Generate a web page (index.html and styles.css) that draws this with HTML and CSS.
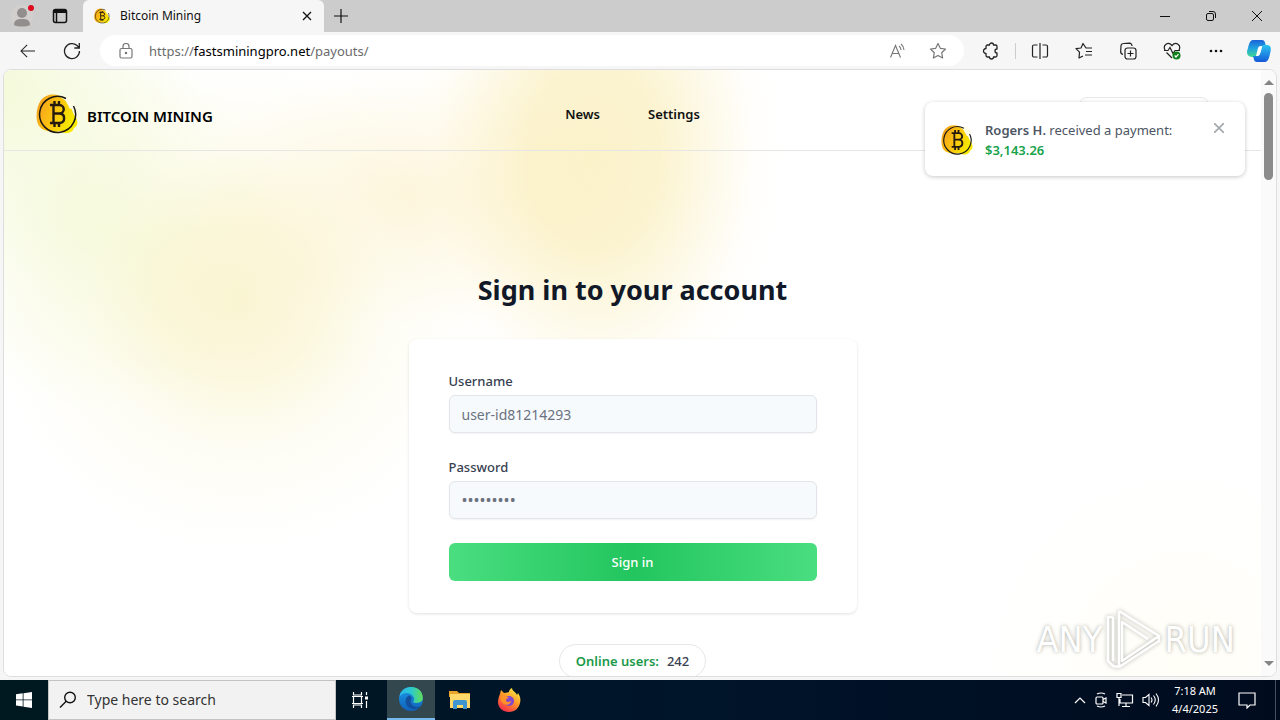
FILE: index.html
```html
<!DOCTYPE html>
<html lang="en">
<head>
<meta charset="utf-8">
<meta name="viewport" content="width=device-width, initial-scale=1">
<title>Bitcoin Mining</title>
<link rel="stylesheet" href="styles.css">
</head>
<body>
<svg class="defs" aria-hidden="true">
  <defs>
    <linearGradient id="gold" x1="0" x2="1" y1="0" y2="0.4"><stop offset="0" stop-color="#f39a20"/><stop offset=".5" stop-color="#fbc012"/><stop offset="1" stop-color="#f6ea00"/></linearGradient>
    <linearGradient id="edgeA" x1="0" x2="1"><stop offset="0" stop-color="#2bb5ec"/><stop offset=".5" stop-color="#2bc9cf"/><stop offset="1" stop-color="#62dc55"/></linearGradient>
    <linearGradient id="edgeB" x1="0" x2="0" y1="0" y2="1"><stop offset="0" stop-color="#1b9be8"/><stop offset="1" stop-color="#1160ba"/></linearGradient>
    <linearGradient id="fox" x1="0.8" x2="0.2" y1="0" y2="1"><stop offset="0" stop-color="#fff04a"/><stop offset=".45" stop-color="#ff9a28"/><stop offset="1" stop-color="#f4244f"/></linearGradient>
    <linearGradient id="copA" x1="0" x2="0" y1="0" y2="1"><stop offset="0" stop-color="#1b62d8"/><stop offset=".5" stop-color="#20a6df"/><stop offset="1" stop-color="#41d990"/></linearGradient>
    <linearGradient id="copB" x1="0" x2="0" y1="0" y2="1"><stop offset="0" stop-color="#2cc5f2"/><stop offset="1" stop-color="#1559d8"/></linearGradient>
    <symbol id="coin" viewBox="0 0 42 42">
      <path d="M3 33C-1 27 0 14 5 7 9 2 17 0 23 3L33 10 38 22C43 28 42 33 38 35 37 40 29 42 24 38 17 40 10 38 6 36Z" fill="url(#gold)"/>
      <path d="M27 3l10 2 2 8-5 3z" fill="#fdfde8"/>
      <path d="M30 5.500A18 18 0 1 0 37.500 13" fill="none" stroke="#1c1714" stroke-width="1.500"/>
      <path d="M14 12h9.500a4.200 4.200 0 0 1 0 8.500H17M24 20.500a4.800 4.800 0 0 1 0 9.500H14M17.500 12V30M18.500 8v4M23 8v4M18.500 30v4M23 30v4" fill="none" stroke="#241a10" stroke-width="2.400"/>
    </symbol>
  </defs>
</svg>

<div class="tabs">
  <button class="tabtool" aria-label="Profile"><svg width="26" height="26" viewBox="0 0 26 26"><circle cx="13" cy="13" r="11" fill="#d2d0ce"/><circle cx="13" cy="10" r="5" fill="#918e8b"/><path d="M5 22c0-5 3-6 8-6s8 1 8 6c-4 2-12 2-16 0z" fill="#918e8b"/><circle cx="22" cy="5" r="3" fill="#e00b1c"/></svg></button>
  <button class="tabtool" aria-label="Tab actions"><svg width="16" height="16" viewBox="0 0 16 16" fill="none" stroke="#111" stroke-width="1.500"><rect x="1.500" y="1.500" width="13" height="13" rx="2"/><path d="M2 3.500h12" stroke-width="3"/><path d="M4.500 4v10"/></svg></button>
  <div class="tab">
    <svg width="16" height="16"><use href="#coin"/></svg>
    <span class="tabtitle">Bitcoin Mining</span>
    <button class="iconbtn" aria-label="Close tab"><svg width="10" height="10" viewBox="0 0 10 10" stroke="#111" stroke-width="1.300"><path d="M1 1l8 8M9 1L1 9"/></svg></button>
  </div>
  <button class="newtab" aria-label="New tab"><svg width="14" height="14" viewBox="0 0 14 14" stroke="#111" stroke-width="1.200"><path d="M7 0v14M0 7h14"/></svg></button>
  <div class="wincontrols">
    <button class="win" aria-label="Minimize"><svg width="10" height="10" stroke="#111"><path d="M0 5.500h10"/></svg></button>
    <button class="win" aria-label="Restore"><svg width="10" height="10" viewBox="0 0 10 10" fill="none" stroke="#111"><rect x=".5" y="2.500" width="7" height="7" rx="1.500"/><path d="M3 .5h4a2.500 2.500 0 0 1 2.500 2.500v4"/></svg></button>
    <button class="win" aria-label="Close"><svg width="10" height="10" viewBox="0 0 10 10" stroke="#111"><path d="M0 0l10 10M10 0L0 10"/></svg></button>
  </div>
</div>

<div class="toolbar">
  <button class="tool" aria-label="Back"><svg width="16" height="14" viewBox="0 0 18 16" fill="none" stroke="#222" stroke-width="1.200"><path d="M17 8H1.500M8 1L1 8l7 7"/></svg></button>
  <button class="tool" aria-label="Reload"><svg width="18" height="18" viewBox="0 0 18 18" fill="none" stroke="#222" stroke-width="1.300"><path d="M16.500 9A7.500 7.500 0 1 1 14 3.500L16 5.500M16.300 1v5h-5"/></svg></button>
  <div class="address">
    <svg width="14" height="16" viewBox="0 0 14 16" fill="none" stroke="#777" stroke-width="1.200"><rect x="1" y="5.500" width="12" height="9.500" rx="1.500"/><path d="M4 5.500V3.500a3 3 0 0 1 6 0v2"/><circle cx="7" cy="10" r=".7" fill="#777"/></svg>
    <span class="url">https://<b>fastsminingpro.net</b>/payouts/</span>
    <button class="iconbtn" aria-label="Read aloud"><svg width="18" height="16" viewBox="0 0 18 16" fill="none" stroke="#777" stroke-width="1.100"><path d="M1.500 14.500L6.500 2.500l5 12M3.300 10.500h6.500M10 3q2 1.500 2 4M12 1q3 2.500 3 6"/></svg></button>
    <button class="iconbtn" aria-label="Add to favorites"><svg width="18" height="18" viewBox="0 0 18 18" fill="none" stroke="#777" stroke-width="1.200" stroke-linejoin="round"><path d="M9 1.500l2.300 4.800 5.200.7-3.800 3.700.9 5.300L9 13.500 4.400 16l.9-5.300L1.500 7l5.200-.7z"/></svg></button>
  </div>
  <button class="tool" aria-label="Extensions"><svg width="18" height="18" viewBox="0 0 18 18" fill="none" stroke="#222" stroke-width="1.300" stroke-linejoin="round"><path d="M5.500 3h2a2 2 0 0 1 4 0h2A1.500 1.500 0 0 1 15 4.500V7a2 2 0 0 0 0 4v2.500a1.500 1.500 0 0 1-1.500 1.500h-2a2 2 0 0 1-4 0h-2A1.500 1.500 0 0 1 4 13.500V11.500a2.500 2.500 0 1 1 0-5v-2A1.500 1.500 0 0 1 5.500 3z"/></svg></button>
  <span class="sep"></span>
  <button class="tool" aria-label="Split screen"><svg width="18" height="16" viewBox="0 0 18 16" fill="none" stroke="#222" stroke-width="1.200"><path d="M6.500 2H3a1.500 1.500 0 0 0-1.500 1.500v9A1.500 1.500 0 0 0 3 14h3.500M11.500 2H15a1.500 1.500 0 0 1 1.500 1.500v9A1.500 1.500 0 0 1 15 14h-3.500M9 0v16"/></svg></button>
  <button class="tool" aria-label="Favorites"><svg width="18" height="18" viewBox="0 0 18 18" fill="none" stroke="#222" stroke-width="1.200" stroke-linejoin="round"><path d="M17 6h-6L8 1.500 6 6l-5 .7 3.500 3.500L4 16l4-2M11 9.500h6M10 13h7"/></svg></button>
  <button class="tool" aria-label="Collections"><svg width="18" height="18" viewBox="0 0 18 18" fill="none" stroke="#222" stroke-width="1.200"><rect x="6" y="6" width="11" height="11" rx="2.500"/><path d="M11.500 8.500v6M8.500 11.500h6M4 12.500C2 12 1.500 10.500 1.700 9L2 4a2.500 2.500 0 0 1 2.500-2.500l6-.3A2.500 2.500 0 0 1 13 4"/></svg></button>
  <button class="tool" aria-label="Browser essentials"><svg width="18" height="18" viewBox="0 0 18 18" fill="none" stroke="#222" stroke-width="1.200"><path d="M2 8C-.5 3 5-1 9 3.500 13-1 18.500 3 16 8M3.500 10.500L9 16M1 8.500h4l2-3 3 6 2-3h5"/><circle cx="13.500" cy="13.500" r="4" fill="#10801d" stroke="none"/><path d="M11.700 13.500l1.300 1.500 2.500-2.800" stroke="#fff"/></svg></button>
  <button class="tool" aria-label="More"><svg width="14" height="4" fill="#111"><circle cx="2" cy="2" r="1.300"/><circle cx="7" cy="2" r="1.300"/><circle cx="12" cy="2" r="1.300"/></svg></button>
  <button class="tool copilot" aria-label="Copilot"><svg width="24" height="22" viewBox="0 0 24 22"><path d="M6 0h9c3 0 3 3 4 6h-3c-3 0-4 2-5 5l-1 4c-1 3-3 2-5 2-5 0-6-4-4-9C2 4 3 0 6 0z" fill="url(#copA)"/><path d="M18 22H10c-3 0-3-3-4-6h3c3 0 4-2 5-5l1-4c1-3 3-2 5-2 5 0 4 5 3 9-1 4-2 8-5 8z" fill="url(#copB)"/><path d="M11 8c1-2 2-2 4-2l-2 8c-1 2-2 2-4 2z" fill="#fff"/></svg></button>
</div>

<div class="frame">
  <div class="page">
    <header class="header">
      <a class="brand" href="#"><svg width="42" height="42"><use href="#coin"/></svg><span>BITCOIN MINING</span></a>
      <nav class="nav"><a href="#">News</a><a href="#">Settings</a></nav>
      <span class="account"></span>
    </header>
    <main class="main">
      <h1 class="title">Sign in to your account</h1>
      <form class="card">
        <label class="label" for="username">Username</label>
        <input class="field" id="username" type="text" placeholder="user-id81214293">
        <label class="label" for="password">Password</label>
        <input class="field dots" id="password" type="password" placeholder="•••••••••">
        <button class="submit" type="button">Sign in</button>
      </form>
      <div class="online"><span class="onlinelabel">Online users:</span><span>242</span></div>
    </main>
    <div class="toast" role="status">
      <svg width="32" height="32"><use href="#coin"/></svg>
      <p class="toasttext"><b>Rogers H.</b> received a payment:<br><strong>$3,143.26</strong></p>
      <button class="iconbtn" aria-label="Dismiss"><svg width="10" height="10" viewBox="0 0 10 10" stroke="#a2a6ad" stroke-width="1.600"><path d="M0 0l10 10M10 0L0 10"/></svg></button>
    </div>
    <div class="watermark">
      <span>ANY</span>
      <svg width="58" height="64" viewBox="0 0 58 64" fill="none" stroke="#fff" stroke-width="2.500" stroke-linejoin="round"><path d="M14 3v56M14 3l40 25-37 25V14l26 17M14 59l40-26v-5M8 9H3v44l5 5 6 1M8 9v44"/></svg>
      <span>RUN</span>
    </div>
  </div>
  <div class="scrollbar"><span class="arrow up"></span><span class="thumb"></span><span class="arrow down"></span></div>
</div>

<div class="taskbar">
  <button class="task" aria-label="Start"><svg width="16" height="16" viewBox="0 0 16 16" fill="#fff"><path d="M0 2.200l6.700-.9v6.200H0zM7.500 1.200L16 0v7.500H7.500zM0 8.300h6.700v6.200L0 13.600zM7.500 8.300H16V16l-8.500-1.200z"/></svg></button>
  <label class="search"><svg width="18" height="18" viewBox="0 0 18 18" fill="none" stroke="#111" stroke-width="1.400"><circle cx="11" cy="6.500" r="5.300"/><path d="M7.200 10.300L1 16.500"/></svg><input class="searchinput" type="text" placeholder="Type here to search" aria-label="Search"></label>
  <button class="task" aria-label="Task view"><svg width="18" height="16" viewBox="0 0 18 16" fill="none" stroke="#fff" stroke-width="1.200"><path d="M2.500 0v3h8V0M2.500 16v-3h8v3M2.500 4.500v7M10.500 4.500v7M1 4.500h11M1 11.500h11M15.500 0v3M15.500 9v7"/><path d="M14 4.500h3v3h-3z" fill="#fff" stroke="none"/></svg></button>
  <button class="task active" aria-label="Edge"><svg width="24" height="24" viewBox="0 0 24 24"><circle cx="12" cy="12" r="12" fill="url(#edgeB)"/><path d="M.5 10C3 5 11 5 14 9c2 3 1 5 0 6 2 2 8 1 9.500-2C25 5 19 0 12 0 6 0 1 4 .5 10z" fill="url(#edgeA)"/><path d="M9 9c-5 4-2 13 6 13 3 0 5-1 7-3-4 2-9 1-10-3-1-2 0-4 1-5-1-2-3-3-4-2z" fill="#124f9c"/></svg></button>
  <button class="task" aria-label="File Explorer"><svg width="22" height="20" viewBox="0 0 22 20"><path d="M0 1h8l2 2h11v4H0z" fill="#e9a52b"/><path d="M1 4h20v14H1z" fill="#ffd96a"/><path d="M4 19v-7q0-2 2-2h10q2 0 2 2v7h-4v-4H8v4z" fill="#3e95d0"/></svg></button>
  <button class="task" aria-label="Firefox"><svg width="24" height="24" viewBox="0 0 24 24"><path d="M3 6l1-4 3 3c3 0 4-1 5-1 0-2 1-3 3-4 0 3 4 4 5 7l1-2c2 3 3 6 2 10-1 5-5 9-11 9C6 24 1 20 1 14c0-3 1-6 2-8z" fill="url(#fox)"/><circle cx="12" cy="13" r="5" fill="#8247cf"/><path d="M4 8c3-1 6 0 8 2-2 0-3 1-3 3 2 2 4 0 5 0 0 3-4 5-7 3-3-2-4-5-3-8z" fill="#ff9329"/></svg></button>
  <div class="tray">
    <svg width="12" height="8" fill="none" stroke="#fff" stroke-width="1.200"><path d="M1 7l5-5 5 5"/></svg>
    <svg width="14" height="16" viewBox="0 0 14 16" fill="none" stroke="#fff" stroke-width="1.200"><rect x="2" y="5" width="7" height="7" rx="1"/><path d="M9 7.500l3-1.500v5l-3-1.500M3 2q4-2 8 0M3 14q4 2 8 0"/></svg>
    <svg width="18" height="16" viewBox="0 0 18 16" fill="none" stroke="#fff" stroke-width="1.200"><path d="M6 3h10.500v8H4V7M1 1.500h4v4H1zM3 5.500V14M10 11v3M6 14.500h8"/></svg>
    <svg width="18" height="16" viewBox="0 0 18 16" fill="none" stroke="#fff" stroke-width="1.100"><path d="M1 5.500h2.500L7 2.500v11l-3.500-3H1zM9 5.500q2 2.500 0 5M11.500 3.500q3.500 4.500 0 9M14 1.500q5 6.500 0 13"/></svg>
  </div>
  <div class="clock"><span>7:18 AM</span><span>4/4/2025</span></div>
  <button class="notify" aria-label="Notifications"><svg width="18" height="18" viewBox="0 0 18 18" fill="none" stroke="#fff" stroke-width="1.200"><path d="M1 2h16v12h-5l-3 3v-3H1z"/></svg></button>
</div>
</body>
</html>
```

FILE: styles.css
```css
* { box-sizing: border-box; }
body {
  margin: 0;
  height: 100vh;
  display: flex;
  flex-direction: column;
  overflow: hidden;
  background: #f6f6f6;
  font-family: "Noto Sans", "Open Sans", sans-serif;
  font-size: 14px;
  line-height: 20px;
  color: #111;
}
button { border: 0; padding: 0; background: none; font: inherit; color: inherit; }
a { color: inherit; text-decoration: none; }
svg { display: block; flex: none; }
.defs { position: absolute; width: 0; height: 0; }
.iconbtn { display: grid; place-items: center; }

/* Browser chrome */
.tabs { display: flex; flex: none; height: 32px; padding-left: 3px; background: #cccccc; }
.tabtool { display: grid; place-items: center; width: 38px; }
.tab {
  display: flex;
  align-items: center;
  gap: 10px;
  width: 241px;
  margin-left: 4px;
  padding: 0 12px 0 11px;
  border-radius: 6px 6px 0 0;
  background: #f6f6f6;
}
.tabtitle { flex: 1; font-size: 12px; }
.newtab { display: grid; place-items: center; width: 34px; }
.wincontrols { display: flex; margin-left: auto; }
.win { display: grid; place-items: center; width: 46px; }
.toolbar { display: flex; flex: none; align-items: center; height: 37px; padding: 0 0 0 6px; }
.tool { display: grid; place-items: center; width: 44px; height: 36px; }
.copilot { width: 42px; }
.address {
  display: flex;
  flex: 1;
  align-items: center;
  gap: 16px;
  height: 31px;
  margin: 0 5px 0 6px;
  padding: 0 14px 0 19px;
  border-radius: 16px;
  background: #fff;
}
.address .iconbtn { width: 24px; }
.url { flex: 1; font-size: 13px; color: #6b6b6b; }
.url b { font-weight: 400; color: #000; }
.sep { width: 1px; height: 16px; margin: 0 2px; background: #ccc; }

.frame {
  display: flex;
  flex: 1;
  min-height: 0;
  margin: 0 3px 3px;
  border: 1px solid #dedede;
  border-radius: 8px;
  overflow: hidden;
  background: #fff;
}
.page {
  position: relative;
  flex: 1;
  overflow: hidden;
  background:
    radial-gradient(ellipse 190px 270px at 590px 85px, rgba(250, 239, 190, .8) 0, rgba(250, 239, 190, .72) 35%, rgba(252, 243, 206, .4) 65%, rgba(255, 250, 232, .15) 85%, transparent 100%),
    radial-gradient(circle at 235px 230px, rgba(248, 239, 188, .65) 0, rgba(249, 242, 198, .55) 80px, rgba(251, 248, 220, .3) 150px, transparent 250px),
    radial-gradient(circle at 100px 160px, rgba(240, 248, 206, .7) 0, rgba(246, 250, 220, .4) 100px, transparent 180px),
    radial-gradient(ellipse 220px 130px at 410px 125px, rgba(253, 243, 212, .85) 0, rgba(254, 246, 222, .5) 50%, transparent 100%),
    radial-gradient(circle at 0 20px, rgba(243, 249, 214, .9) 0, transparent 190px),
    radial-gradient(circle at 1180px 600px, #fffef7 0, transparent 200px),
    #fff;
}
.header {
  display: grid;
  grid-template-columns: 1fr auto 1fr;
  align-items: center;
  height: 81px;
  padding: 0 32px;
  border-bottom: 1px solid #e6e7e4;
}
.brand { display: flex; align-items: center; gap: 9px; padding-top: 8px; font-size: 15px; font-weight: 600; color: #000; }
.brand span { padding-top: 4px; }
.nav { display: flex; gap: 48px; padding-top: 8px; font-size: 13px; font-weight: 600; }
.account { justify-self: end; width: 130px; height: 34px; margin: 8px 20px 0; border: 1px solid #e5e7eb; border-radius: 8px; background: #fff; }

/* Sign-in form */
.main { display: flex; flex-direction: column; align-items: center; padding-top: 121px; }
.title { margin: 0; font-size: 27px; line-height: 36px; font-weight: 700; color: #111827; }
.card {
  display: flex;
  flex-direction: column;
  width: 448px;
  max-width: 100%;
  margin-top: 31px;
  padding: 32px 40px;
  border-radius: 8px;
  background: #fff;
  box-shadow: 0 1px 3px rgba(0, 0, 0, .12);
}
.label { font-size: 13px; font-weight: 500; color: #374151; }
.field {
  height: 38px;
  margin: 4px 0 24px;
  padding: 0 12px;
  border: 1px solid #e2e6ea;
  border-radius: 6px;
  background: #f7fafd;
  font: inherit;
  box-shadow: 0 1px 2px rgba(0, 0, 0, .05);
}
.dots { font-size: 16px; }
.field::placeholder { color: #6b7280; opacity: 1; }
.submit {
  height: 38px;
  border-radius: 6px;
  background: linear-gradient(90deg, #4ade80, #22c55e 50%, #4ade80);
  color: #fff;
  font-size: 13px;
  font-weight: 500;
}
.online {
  display: flex;
  flex: none;
  gap: 8px;
  margin-top: 31px;
  padding: 6px 16px;
  border: 1px solid #e5e7eb;
  border-radius: 18px;
  background: #fff;
  color: #374151;
  font-size: 13px;
  font-weight: 500;
}
.onlinelabel { color: #1b9a4a; font-weight: 600; }

.toast {
  position: absolute;
  top: 32px;
  right: 16px;
  display: flex;
  gap: 12px;
  width: 320px;
  padding: 18px 21px 16px 16px;
  border-radius: 8px;
  background: #fff;
  box-shadow: 0 1px 4px rgba(0, 0, 0, .22);
  color: #4b5563;
  font-size: 13px;
}
.toast > svg { margin-top: 4px; }
.toasttext { flex: 1; margin: 0; }
.toasttext b { font-weight: 600; }
.toasttext strong { color: #16a34a; font-weight: 600; }
.toast .iconbtn { height: 16px; }

.watermark {
  position: absolute;
  right: 26px;
  bottom: 4px;
  display: flex;
  align-items: center;
  gap: 2px;
  color: #fff;
  font-family: "Liberation Sans Narrow", "DejaVu Sans Condensed", sans-serif;
  font-size: 36px;
  line-height: 44px;
  text-shadow: 0 0 4px #b5b4ae, 0 0 1px #d2d1cb;
}
.watermark svg { filter: drop-shadow(0 0 2px #b5b4ae); }

.scrollbar { display: flex; flex-direction: column; align-items: center; width: 15px; padding: 10px 0 10px; background: #fafafa; }
.arrow { border: 5px solid transparent; border-top: 0; border-bottom: 5px solid #858585; }
.down { margin-top: auto; border-top: 5px solid #858585; border-bottom: 0; }
.thumb { width: 9px; height: 87px; margin-top: 8px; border-radius: 5px; background: #8b8b8b; }

/* Taskbar */
.taskbar { display: flex; flex: none; height: 40px; background: linear-gradient(90deg, #001820, #00142a 55%, #000b1e); color: #fff; }
.task { display: grid; place-items: center; width: 48px; }
.search { display: flex; flex: none; align-items: center; gap: 10px; width: 288px; padding-left: 10px; border: 1px solid #c4c4c4; background: #f2f2f2; }
.searchinput { flex: 1; min-width: 0; padding: 0; border: 0; background: none; font: inherit; }
.searchinput::placeholder { color: #333; opacity: 1; }
.active { margin: 0 1px 0 3px; border-bottom: 2px solid #76b9ed; background: #33474f; }
.active + .task { margin-right: 1px; }
.tray { display: flex; align-items: center; gap: 8px; margin-left: auto; }
.clock { display: flex; flex-direction: column; align-items: center; justify-content: center; width: 70px; font-size: 11px; line-height: 18px; }
.notify { display: grid; place-items: center; width: 46px; margin-right: 4px; border-right: 1px solid #45505e; }
.notify svg { margin-right: 11px; }
```
